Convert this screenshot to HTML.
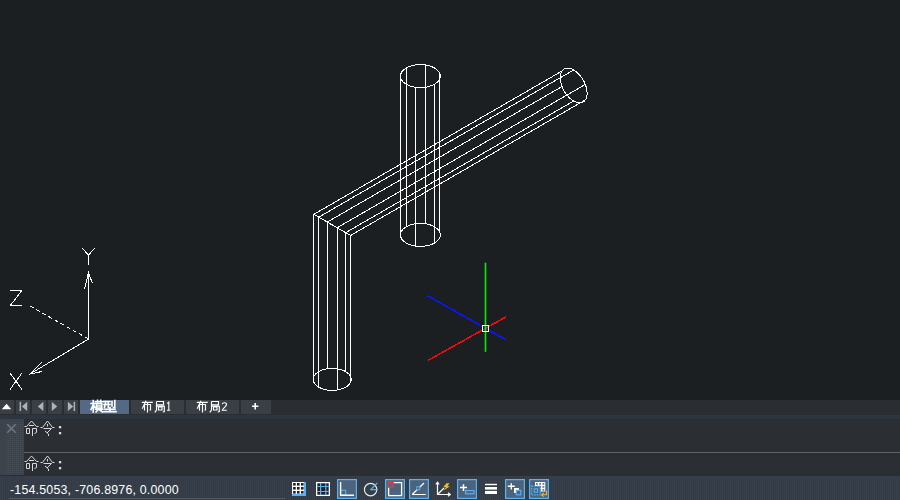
<!DOCTYPE html>
<html><head><meta charset="utf-8"><style>
html,body{margin:0;padding:0;width:900px;height:500px;overflow:hidden;background:#1c1f22;font-family:"Liberation Sans",sans-serif}
#vp{position:absolute;left:0;top:0;width:900px;height:400px}
.w{fill:none;stroke:#ffffff;stroke-width:1;shape-rendering:crispEdges}
.abs{position:absolute}
</style></head><body>
<svg id="vp" width="900" height="400" viewBox="0 0 900 400">
<polygon points="434.42,67.98 435.31,68.52 436.14,69.11 436.9,69.72 437.58,70.36 438.2,71.02 438.74,71.7 439.19,72.41 439.57,73.13 439.87,73.86 440.08,74.6 440.21,75.35 440.25,76.1 440.21,76.85 440.08,77.6 439.87,78.34 439.57,79.07 439.19,79.79 438.74,80.5 438.2,81.18 437.58,81.84 436.9,82.48 436.14,83.09 435.31,83.68 434.42,84.22 433.47,84.74 432.46,85.22 431.41,85.65 430.3,86.05 429.15,86.4 427.97,86.71 426.75,86.98 425.5,87.2 424.23,87.37 422.95,87.49 421.65,87.56 420.35,87.59 419.05,87.56 417.75,87.49 416.47,87.37 415.2,87.2 413.95,86.98 412.73,86.71 411.55,86.4 410.4,86.05 409.29,85.65 408.24,85.22 407.23,84.74 406.28,84.22 405.39,83.68 404.56,83.09 403.8,82.48 403.12,81.84 402.5,81.18 401.96,80.5 401.51,79.79 401.13,79.07 400.83,78.34 400.62,77.6 400.49,76.85 400.45,76.1 400.49,75.35 400.62,74.6 400.83,73.86 401.13,73.13 401.51,72.41 401.96,71.7 402.5,71.02 403.12,70.36 403.8,69.72 404.56,69.11 405.39,68.52 406.28,67.98 407.23,67.46 408.24,66.98 409.29,66.55 410.4,66.15 411.55,65.8 412.73,65.49 413.95,65.22 415.2,65 416.47,64.83 417.75,64.71 419.05,64.64 420.35,64.61 421.65,64.64 422.95,64.71 424.23,64.83 425.5,65 426.75,65.22 427.97,65.49 429.15,65.8 430.3,66.15 431.41,66.55 432.46,66.98 433.47,67.46 434.42,67.98" class="w"/>
<polygon points="434.42,226.78 435.31,227.32 436.14,227.91 436.9,228.52 437.58,229.16 438.2,229.82 438.74,230.5 439.19,231.21 439.57,231.93 439.87,232.66 440.08,233.4 440.21,234.15 440.25,234.9 440.21,235.65 440.08,236.4 439.87,237.14 439.57,237.87 439.19,238.59 438.74,239.3 438.2,239.98 437.58,240.64 436.9,241.28 436.14,241.89 435.31,242.48 434.42,243.02 433.47,243.54 432.46,244.02 431.41,244.45 430.3,244.85 429.15,245.2 427.97,245.51 426.75,245.78 425.5,246 424.23,246.17 422.95,246.29 421.65,246.36 420.35,246.39 419.05,246.36 417.75,246.29 416.47,246.17 415.2,246 413.95,245.78 412.73,245.51 411.55,245.2 410.4,244.85 409.29,244.45 408.24,244.02 407.23,243.54 406.28,243.02 405.39,242.48 404.56,241.89 403.8,241.28 403.12,240.64 402.5,239.98 401.96,239.3 401.51,238.59 401.13,237.87 400.83,237.14 400.62,236.4 400.49,235.65 400.45,234.9 400.49,234.15 400.62,233.4 400.83,232.66 401.13,231.93 401.51,231.21 401.96,230.5 402.5,229.82 403.12,229.16 403.8,228.52 404.56,227.91 405.39,227.32 406.28,226.78 407.23,226.26 408.24,225.78 409.29,225.35 410.4,224.95 411.55,224.6 412.73,224.29 413.95,224.02 415.2,223.8 416.47,223.63 417.75,223.51 419.05,223.44 420.35,223.41 421.65,223.44 422.95,223.51 424.23,223.63 425.5,223.8 426.75,224.02 427.97,224.29 429.15,224.6 430.3,224.95 431.41,225.35 432.46,225.78 433.47,226.26 434.42,226.78" class="w"/>
<line x1="439.57" y1="73.13" x2="439.57" y2="231.93" class="w"/>
<line x1="434.42" y1="84.22" x2="434.42" y2="243.02" class="w"/>
<line x1="415.2" y1="87.2" x2="415.2" y2="246" class="w"/>
<line x1="400.5" y1="79.07" x2="400.5" y2="237.87" class="w"/>
<line x1="406.28" y1="67.98" x2="406.28" y2="226.78" class="w"/>
<line x1="425.5" y1="65" x2="425.5" y2="223.8" class="w"/>
<polygon points="345.64,371.64 346.48,372.17 347.27,372.72 348,373.31 348.65,373.92 349.24,374.55 349.75,375.2 350.19,375.87 350.55,376.56 350.83,377.26 351.04,377.97 351.16,378.68 351.2,379.4 351.16,380.12 351.04,380.83 350.83,381.54 350.55,382.24 350.19,382.93 349.75,383.6 349.24,384.25 348.65,384.88 348,385.49 347.27,386.08 346.48,386.63 345.64,387.16 344.73,387.65 343.77,388.1 342.76,388.52 341.7,388.9 340.6,389.24 339.47,389.53 338.31,389.79 337.12,390 335.91,390.16 334.68,390.28 333.44,390.35 332.2,390.37 330.96,390.35 329.72,390.28 328.49,390.16 327.28,390 326.09,389.79 324.93,389.53 323.8,389.24 322.7,388.9 321.64,388.52 320.63,388.1 319.67,387.65 318.76,387.16 317.92,386.63 317.13,386.08 316.4,385.49 315.75,384.88 315.16,384.25 314.65,383.6 314.21,382.93 313.85,382.24 313.57,381.54 313.36,380.83 313.24,380.12 313.2,379.4 313.24,378.68 313.36,377.97 313.57,377.26 313.85,376.56 314.21,375.87 314.65,375.2 315.16,374.55 315.75,373.92 316.4,373.31 317.13,372.72 317.92,372.17 318.76,371.64 319.67,371.15 320.63,370.7 321.64,370.28 322.7,369.9 323.8,369.56 324.93,369.27 326.09,369.01 327.28,368.8 328.49,368.64 329.72,368.52 330.96,368.45 332.2,368.43 333.44,368.45 334.68,368.52 335.91,368.64 337.12,368.8 338.31,369.01 339.47,369.27 340.6,369.56 341.7,369.9 342.76,370.28 343.77,370.7 344.73,371.15 345.64,371.64" class="w"/>
<line x1="345.64" y1="371.64" x2="345.64" y2="232.66" class="w"/>
<line x1="345.64" y1="232.66" x2="573.65" y2="101.01" class="w"/>
<line x1="350.55" y1="382.24" x2="350.55" y2="235.5" class="w"/>
<line x1="350.55" y1="235.5" x2="585.28" y2="99.97" class="w"/>
<line x1="337.12" y1="390" x2="337.12" y2="227.74" class="w"/>
<line x1="337.12" y1="227.74" x2="585.28" y2="84.46" class="w"/>
<line x1="318.76" y1="387.16" x2="318.76" y2="217.14" class="w"/>
<line x1="318.76" y1="217.14" x2="573.65" y2="69.99" class="w"/>
<line x1="313.85" y1="376.56" x2="313.85" y2="214.3" class="w"/>
<line x1="313.85" y1="214.3" x2="562.01" y2="71.03" class="w"/>
<line x1="327.28" y1="368.8" x2="327.28" y2="222.06" class="w"/>
<line x1="327.28" y1="222.06" x2="562.01" y2="86.54" class="w"/>
<polyline points="313.85,214.3 318.76,217.14 327.28,222.06 337.12,227.74 345.64,232.66 350.55,235.5" class="w"/>
<polygon points="573.65,101.01 574.53,101.49 575.4,101.89 576.27,102.23 577.13,102.49 577.97,102.68 578.79,102.8 579.59,102.84 580.37,102.81 581.11,102.71 581.83,102.53 582.51,102.28 583.15,101.95 583.75,101.56 584.31,101.1 584.82,100.57 585.28,99.97 585.7,99.32 586.06,98.6 586.37,97.83 586.63,97.01 586.82,96.13 586.97,95.22 587.05,94.25 587.08,93.26 587.05,92.23 586.97,91.17 586.82,90.08 586.63,88.98 586.37,87.86 586.06,86.73 585.7,85.6 585.28,84.46 584.82,83.33 584.31,82.21 583.75,81.1 583.15,80.02 582.51,78.95 581.83,77.91 581.11,76.91 580.37,75.94 579.59,75.02 578.79,74.14 577.97,73.3 577.13,72.52 576.27,71.8 575.4,71.13 574.53,70.53 573.65,69.99 572.77,69.51 571.89,69.11 571.03,68.77 570.17,68.51 569.33,68.32 568.51,68.2 567.71,68.16 566.93,68.19 566.18,68.29 565.47,68.47 564.79,68.72 564.15,69.05 563.55,69.44 562.99,69.9 562.48,70.43 562.01,71.03 561.6,71.68 561.24,72.4 560.93,73.17 560.67,73.99 560.47,74.87 560.33,75.78 560.24,76.75 560.21,77.74 560.24,78.77 560.33,79.83 560.47,80.92 560.67,82.02 560.93,83.14 561.24,84.27 561.6,85.4 562.01,86.54 562.48,87.67 562.99,88.79 563.55,89.9 564.15,90.98 564.79,92.05 565.47,93.09 566.18,94.09 566.93,95.06 567.71,95.98 568.51,96.86 569.33,97.7 570.17,98.48 571.03,99.2 571.89,99.87 572.77,100.47 573.65,101.01" class="w"/>

<g class="w">
<line x1="88.5" y1="339" x2="88.5" y2="272.5"/>
<polyline points="84.5,289 88.5,272.5 92.5,283.5"/>
<polyline points="82,248 88.5,255 95,248"/><line x1="88.5" y1="255" x2="88.5" y2="264.5"/>
<line x1="88.5" y1="339" x2="30" y2="374"/>
<polyline points="42,362 30,374 42,371.5"/>
<line x1="10" y1="373" x2="22" y2="389.5"/><line x1="22" y1="373" x2="10" y2="389.5"/>
<line x1="88.5" y1="339" x2="30" y2="306" stroke-dasharray="4,3"/>
<polyline points="10.2,290.4 21.8,290.4 10.6,305.2 22,305.2"/>
</g>

<g shape-rendering="crispEdges">
<line x1="427.7" y1="295.7" x2="505.8" y2="339.7" stroke="#0a14ff" stroke-width="1.6"/>
<line x1="427.7" y1="360.6" x2="505.8" y2="317" stroke="#f00a0a" stroke-width="1.6"/>
<line x1="485.5" y1="262.7" x2="485.5" y2="351.8" stroke="#00f000" stroke-width="1.6" shape-rendering="geometricPrecision"/>
<rect x="482.5" y="325.5" width="6" height="6" fill="none" stroke="#fff" stroke-width="1"/>
</g>

</svg>
<svg class="abs" style="left:0;top:0" width="900" height="500" viewBox="0 0 900 500">
<rect x="0" y="400" width="900" height="15" fill="#2a2d31" />
<rect x="0" y="415" width="900" height="4" fill="#2d3640" />
<rect x="0" y="419" width="900" height="57" fill="#2b2e32" />
<rect x="0" y="419" width="24" height="56" fill="#3c434b" />
<defs><pattern id="dots" x="0" y="0" width="2" height="2" patternUnits="userSpaceOnUse"><rect x="0" y="0" width="1" height="1" fill="#474e57"/></pattern><pattern id="vstr" x="0" y="0" width="2" height="2" patternUnits="userSpaceOnUse"><rect x="0" y="0" width="1" height="2" fill="#37404a"/></pattern></defs>
<rect x="5" y="422" width="18" height="51" fill="url(#dots)" />
<rect x="24" y="452" width="876" height="1" fill="#5e6368" />
<rect x="0" y="476" width="900" height="24" fill="#333c46" />
<rect x="0" y="476" width="900" height="24" fill="url(#vstr)" />
<rect x="9" y="498" width="276" height="1" fill="#535a63" />
<rect x="0" y="400" width="14" height="14" fill="#3a3f46" />
<rect x="16" y="400" width="14" height="14" fill="#3a3f46" />
<rect x="32" y="400" width="14" height="14" fill="#3a3f46" />
<rect x="48" y="400" width="14" height="14" fill="#3a3f46" />
<rect x="64" y="400" width="14" height="14" fill="#3a3f46" />
<rect x="80" y="400" width="49" height="14" fill="#546a84" />
<rect x="131" y="400" width="53" height="14" fill="#3a3f46" />
<rect x="186" y="400" width="53" height="14" fill="#3a3f46" />
<rect x="241" y="400" width="30" height="14" fill="#3a3f46" />
<polygon points="1.8,409.2 6.6,403.8 11.2,409.2" fill="#ffffff"/>
<rect x="19.6" y="401.8" width="1.5" height="9.2" fill="#aab2bc"/>
<polygon points="21.9,406.4 27.2,401.8 27.2,411" fill="#aab2bc"/>
<polygon points="37.8,406.4 43.3,401.8 43.3,411" fill="#aab2bc"/>
<polygon points="57.2,406.4 51.8,401.8 51.8,411" fill="#aab2bc"/>
<polygon points="73.2,406.4 67.9,401.8 67.9,411" fill="#aab2bc"/>
<rect x="73.6" y="401.8" width="1.5" height="9.2" fill="#aab2bc"/>
<path d="M252,406.2H258.4M255.2,403V409.4" stroke="#fff" stroke-width="1.6"/><path d="M24.5,426.5 L26.5,426.5 L31.5,421 L36.5,426.5 L38.5,426.5 M29,425.5 L34,425.5 M26.5,428.5 L29.5,428.5 L29.5,433.5 L26.5,433.5 L26.5,428.5 M32.5,436 L32.5,428.5 L36.5,428.5 L36.5,432.5 L34.5,433.5 M40.5,427.5 L42.5,427.5 L47.5,421 L52.5,427.5 L54.5,427.5 M47.5,424 L47.5,426.5 M43.5,428.5 L51.5,428.5 L47,433 M45,431 L48.5,434 L48.5,436" fill="none" stroke="#d8dbde" stroke-width="1"/><rect x="58.9" y="426" width="2.3" height="2.3" fill="#d8dbde"/><rect x="58.9" y="432" width="2.3" height="2.3" fill="#d8dbde"/><path d="M24.5,461.5 L26.5,461.5 L31.5,456 L36.5,461.5 L38.5,461.5 M29,460.5 L34,460.5 M26.5,463.5 L29.5,463.5 L29.5,468.5 L26.5,468.5 L26.5,463.5 M32.5,471 L32.5,463.5 L36.5,463.5 L36.5,467.5 L34.5,468.5 M40.5,462.5 L42.5,462.5 L47.5,456 L52.5,462.5 L54.5,462.5 M47.5,459 L47.5,461.5 M43.5,463.5 L51.5,463.5 L47,468 M45,466 L48.5,469 L48.5,471" fill="none" stroke="#d8dbde" stroke-width="1"/><rect x="58.9" y="461" width="2.3" height="2.3" fill="#d8dbde"/><rect x="58.9" y="467" width="2.3" height="2.3" fill="#d8dbde"/><path d="M91,403.5 L95,403.5 M93.2,400.5 L93.2,412 M93,405 L91,409.5 M93.5,405 L95,407.5 M95.5,401.8 L102.8,401.8 M97.5,400.3 L97.5,403 M100.7,400.3 L100.7,403 M96.5,403.8 L101.8,403.8 L101.8,408 L96.5,408 L96.5,403.8 M96.5,406 L101.8,406 M95.5,409.2 L102.8,409.2 M99.2,408 L96,412 M99.2,409.5 L102.5,412 M104,401.5 L110,401.5 M104,404.5 L110,404.5 M105.8,401.5 L104.5,407.5 M108.3,401.5 L108.3,407.5 M112,401.5 L112,406 M114.8,400.5 L114.8,407.5 L113.5,407.5 M105,409.2 L115,409.2 M110,407.5 L110,411.5 M104,411.6 L116,411.6" fill="none" stroke="#ffffff" stroke-width="1.6" stroke-linecap="square"/>
<path d="M141.8,402.3 L152.8,402.3 M146,400.8 L142.2,408.8 M144.5,410.5 L144.5,404.5 L150.5,404.5 L150.5,410 L149.5,410 M147.5,402.5 L147.5,412.5 M156.5,401.5 L163.5,401.5 L163.5,404.8 L156.5,404.8 M156.5,401.5 L156.5,410 L154.8,412.3 M158.5,407 L162,407 L162,410 L158.5,410 L158.5,407 M156.5,406.2 L164.3,406.2 L164.3,411.5 L162.8,412" fill="none" stroke="#ffffff" stroke-width="1.15"/>
<path d="M196.8,402.3 L207.8,402.3 M201,400.8 L197.2,408.8 M199.5,410.5 L199.5,404.5 L205.5,404.5 L205.5,410 L204.5,410 M202.5,402.5 L202.5,412.5 M211.5,401.5 L218.5,401.5 L218.5,404.8 L211.5,404.8 M211.5,401.5 L211.5,410 L209.8,412.3 M213.5,407 L217,407 L217,410 L213.5,410 L213.5,407 M211.5,406.2 L219.3,406.2 L219.3,411.5 L217.8,412" fill="none" stroke="#ffffff" stroke-width="1.15"/>
<path d="M167.2,403.5L168.8,402.2V410M167,410.3H170.2" fill="none" stroke="#fff" stroke-width="1.1"/>
<path d="M222.2,404.2C222.5,402.3 226.5,402 226.5,404.5C226.5,406.5 223,407.8 222.2,410.3H226.8" fill="none" stroke="#fff" stroke-width="1.1"/><path d="M7.3,424.3L15.7,432.7M15.7,424.3L7.3,432.7" stroke="#6e7680" stroke-width="1.6"/><rect x="292" y="482" width="14" height="14" fill="#ffffff"/>
<rect x="293.1" y="483" width="2.6" height="2.6" fill="#1f2226"/>
<rect x="293.1" y="487" width="2.6" height="2.6" fill="#1f2226"/>
<rect x="293.1" y="491" width="2.6" height="2.6" fill="#1f2226"/>
<rect x="297" y="483" width="2.6" height="2.6" fill="#1f2226"/>
<rect x="297" y="487" width="2.6" height="2.6" fill="#1f2226"/>
<rect x="297" y="491" width="2.6" height="2.6" fill="#1f2226"/>
<rect x="301" y="483" width="2.6" height="2.6" fill="#1f2226"/>
<rect x="301" y="487" width="2.6" height="2.6" fill="#1f2226"/>
<rect x="301" y="491" width="2.6" height="2.6" fill="#1f2226"/>
<path d="M292,494H306V482H304V494" fill="#56b2f2"/><rect x="292" y="494" width="14" height="2" fill="#56b2f2"/><rect x="304" y="482" width="2" height="14" fill="#56b2f2"/>
<rect x="316" y="482" width="14" height="14" fill="#ffffff"/><rect x="317.3" y="483.3" width="11.4" height="11.4" fill="#1f2226"/>
<rect x="320" y="483" width="1.2" height="12" fill="#56b2f2"/><rect x="325.2" y="483" width="1.2" height="12" fill="#56b2f2"/>
<rect x="317" y="486" width="12" height="1" fill="#56b2f2"/><rect x="317" y="491" width="12" height="1" fill="#56b2f2"/>
<rect x="337.6" y="479.6" width="18.8" height="18.8" fill="#4d637d" stroke="#56b2f2" stroke-width="1.2"/>
<rect x="340.5" y="490.3" width="5.2" height="4.9" fill="none" stroke="#56b2f2" stroke-width="1.1"/>
<path d="M340.6,482V495.3H354" fill="none" stroke="#fff" stroke-width="1.4"/>
<circle cx="370.6" cy="489.6" r="6.2" fill="none" stroke="#e8eaec" stroke-width="1.2"/>
<path d="M370.2,489.6H377.8M370.6,489.6L377.2,483" stroke="#56b2f2" stroke-width="1.2" fill="none"/>
<rect x="385.6" y="479.6" width="18.8" height="18.8" fill="#4d637d" stroke="#56b2f2" stroke-width="1.2"/>
<rect x="388.6" y="482.6" width="13" height="13" fill="none" stroke="#fff" stroke-width="1.3"/>
<rect x="388.6" y="482.6" width="4.6" height="4.6" fill="#3d6f9c" stroke="#e23a3a" stroke-width="1.2"/>
<rect x="409.6" y="479.6" width="18.8" height="18.8" fill="#4d637d" stroke="#56b2f2" stroke-width="1.2"/>
<path d="M412.2,494.5L424,483M412.2,494.5H425.8" fill="none" stroke="#fff" stroke-width="1.2"/>
<rect x="416.8" y="486.8" width="3" height="3" fill="#4d637d" stroke="#56b2f2" stroke-width="1"/>
<path d="M437.5,482.5V494.5H450M437.5,494.5L444,488" fill="none" stroke="#fff" stroke-width="1.2"/>
<path d="M435.8,484.5L437.5,482.3L439.2,484.5M448,492.8L450.2,494.5L448,496.2" fill="none" stroke="#fff" stroke-width="1.2"/>
<path d="M446.5,483.3L443.2,487.3H446.2L443.5,490.5L450,486.3H447.2L449.5,483.3Z" fill="#f2c12e"/>
<rect x="457.6" y="479.6" width="18.8" height="18.8" fill="#4d637d" stroke="#56b2f2" stroke-width="1.2"/>
<path d="M460,487.6H467M463.5,484.3V491" stroke="#fff" stroke-width="1.5"/>
<rect x="465.6" y="490.6" width="8.4" height="3.2" fill="none" stroke="#56b2f2" stroke-width="1.2"/>
<rect x="485" y="483.8" width="12" height="1.4" fill="#fff"/><rect x="485" y="487" width="12" height="2.6" fill="#fff"/><rect x="485" y="490.9" width="12" height="3.1" fill="#fff"/>
<rect x="505.6" y="479.6" width="18.8" height="18.8" fill="#4d637d" stroke="#56b2f2" stroke-width="1.2"/>
<path d="M507.8,486.2H514.8M511.3,483.2V489.4" stroke="#fff" stroke-width="1.4"/>
<rect x="514" y="488" width="5" height="5" fill="#fff"/>
<rect x="516.3" y="490.3" width="4.5" height="4.5" fill="#4d637d" stroke="#56b2f2" stroke-width="1.2"/>
<rect x="529.6" y="479.6" width="18.8" height="18.8" fill="#4d637d" stroke="#56b2f2" stroke-width="1.2"/>
<rect x="535" y="482" width="10.3" height="9.5" fill="#fff"/>
<rect x="536" y="483" width="1.8" height="1.8" fill="#6a7b90"/>
<rect x="536" y="486" width="1.8" height="1.8" fill="#6a7b90"/>
<rect x="536" y="489" width="1.8" height="1.8" fill="#6a7b90"/>
<rect x="539.3" y="483" width="1.8" height="1.8" fill="#6a7b90"/>
<rect x="539.3" y="486" width="1.8" height="1.8" fill="#6a7b90"/>
<rect x="539.3" y="489" width="1.8" height="1.8" fill="#6a7b90"/>
<rect x="542.5" y="483" width="1.8" height="1.8" fill="#6a7b90"/>
<rect x="542.5" y="486" width="1.8" height="1.8" fill="#6a7b90"/>
<rect x="542.5" y="489" width="1.8" height="1.8" fill="#6a7b90"/>
<rect x="531.6" y="486.2" width="8.6" height="8.6" fill="#4d637d" stroke="#56b2f2" stroke-width="1.2" stroke-dasharray="1.4,1"/>
<rect x="534.2" y="488.8" width="3.4" height="3.4" fill="none" stroke="#56b2f2" stroke-width="1.1"/>
<path d="M546.5,490.5V494.8H541.8M543.6,493L541.6,494.8L543.6,496.6" fill="none" stroke="#f2b437" stroke-width="1.1"/>
</svg>
<div class="abs" style="left:10px;top:482px;letter-spacing:0.2px;font-size:12.4px;color:#fff;white-space:pre;line-height:16px">-154.5053, -706.8976, 0.0000</div>
</body></html>
